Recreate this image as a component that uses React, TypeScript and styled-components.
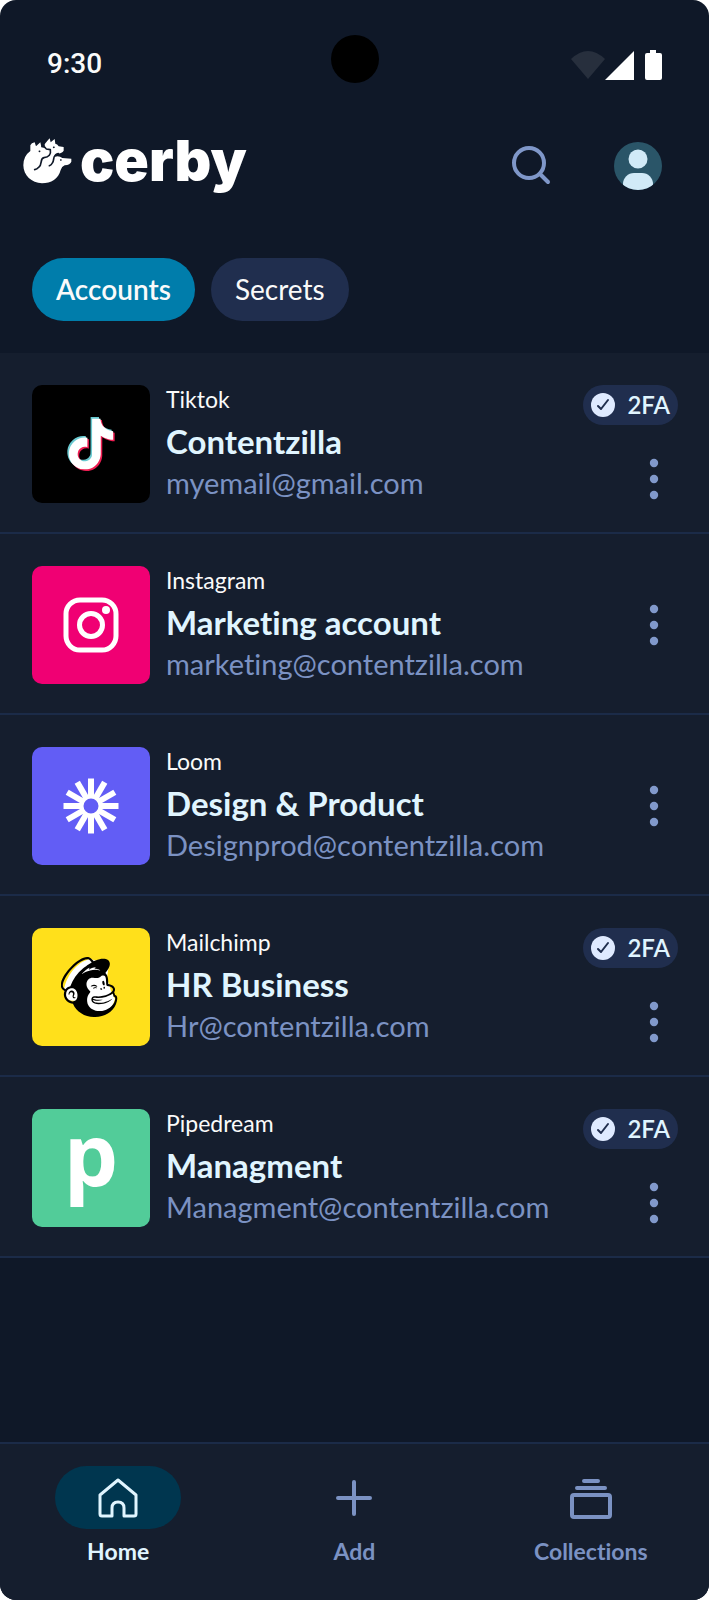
import React from "react";
import styled, { createGlobalStyle } from "styled-components";
import { SiMailchimp, SiTiktok } from "react-icons/si";

const c = {
  page: "#0f1828",
  surface: "#151e2e",
  line: "#1b2b48",
  chip: "#202e4e",
  accent: "#007dab",
  activeNav: "#00364f",
  ice: "#e0f5ff",
  muted: "#7b92c3",
  white: "#fafafa",
};

const GlobalStyle = createGlobalStyle`
  *, *::before, *::after { box-sizing: border-box; }
  body {
    margin: 0;
    background: #fff;
    font-family: Lato, "Open Sans", sans-serif;
    font-variant-ligatures: none;
  }
  button { border: 0; padding: 0; background: none; font: inherit; font-variant-ligatures: none; color: inherit; cursor: pointer; }
  svg { display: block; flex: none; }
`;

const Screen = styled.div`
  display: flex;
  flex-direction: column;
  min-height: 100vh;
  overflow: hidden;
  border-radius: 16px;
  background: ${c.page};
  color: ${c.white};
`;

const StatusBar = styled.div`
  position: relative;
  display: flex;
  align-items: center;
  justify-content: space-between;
  height: 128px;
  padding: 0 47px;
`;

const Clock = styled.time`
  font: 500 28px/32px Roboto, sans-serif;
`;

const Camera = styled.div`
  position: absolute;
  top: 35px;
  left: 50%;
  width: 48px;
  height: 48px;
  margin-left: -24px;
  border-radius: 50%;
  background: #000;
`;

const Header = styled.header`
  display: flex;
  align-items: center;
  justify-content: space-between;
  height: 76px;
  padding: 0 47px 0 23px;
`;

const Brand = styled.a`
  display: flex;
  align-items: center;
  gap: 8px;
  padding-bottom: 10px;
  color: #fff;
  text-decoration: none;
`;

const BrandName = styled.span`
  font: 900 57px/64px Inter, sans-serif;
`;

const HeaderActions = styled.div`
  display: flex;
  align-items: center;
  gap: 59px;
`;

const IconButton = styled.button`
  display: grid;
  place-items: center;
  width: 48px;
  height: 48px;
`;

const Chips = styled.div`
  display: flex;
  gap: 16px;
  padding: 54px 32px 32px;
`;

const Chip = styled.button<{ $active?: boolean }>`
  height: 63px;
  padding: 0 24px 2px;
  border-radius: 32px;
  background: ${(p) => (p.$active ? c.accent : c.chip)};
  color: ${c.white};
  font-size: 28px;
  font-weight: ${(p) => (p.$active ? 600 : 400)};
`;

const List = styled.ul`
  margin: 0;
  padding: 0;
  list-style: none;
  background: ${c.surface};
`;

const Row = styled.li`
  display: flex;
  gap: 16px;
  padding: 32px 31px 29px 32px;
  border-bottom: 2px solid ${c.line};
`;

const Tile = styled.div<{ $color: string }>`
  display: grid;
  place-items: center;
  flex: none;
  width: 118px;
  height: 118px;
  border-radius: 10px;
  background: ${(p) => p.$color};
`;

const Details = styled.div`
  display: flex;
  flex: 1;
  flex-direction: column;
  gap: 6px;
  min-width: 0;
  white-space: nowrap;
`;

const Service = styled.span`
  font-size: 23px;
  line-height: 28px;
`;

const AccountName = styled.span`
  color: ${c.ice};
  font-size: 33px;
  font-weight: 700;
  line-height: 44px;
`;

const Email = styled.span`
  color: ${c.muted};
  font-size: 29px;
  line-height: 28px;
`;

const Side = styled.div<{ $centered: boolean }>`
  display: flex;
  flex-direction: column;
  align-items: flex-end;
  justify-content: ${(p) => (p.$centered ? "center" : "space-between")};
`;

const Badge = styled.span`
  display: flex;
  align-items: center;
  gap: 12px;
  height: 40px;
  padding: 0 8px;
  border-radius: 20px;
  background: ${c.chip};
  color: ${c.ice};
  font-size: 24px;
  font-weight: 600;
`;

const BadgeLabel = styled.span`
  padding-bottom: 2px;
`;

const BottomNav = styled.nav`
  display: grid;
  grid-template-columns: repeat(3, 1fr);
  margin-top: auto;
  padding: 22px 0 35px;
  border-top: 2px solid ${c.line};
  background: ${c.surface};
`;

const NavItem = styled.button<{ $active?: boolean }>`
  display: flex;
  flex-direction: column;
  align-items: center;
  gap: 8px;
  color: ${(p) => (p.$active ? c.ice : c.muted)};
  font-size: 23px;
  font-weight: 700;
  line-height: 28px;
`;

const NavPill = styled.span<{ $active?: boolean }>`
  display: grid;
  place-items: center;
  width: 126px;
  height: 63px;
  border-radius: 32px;
  background: ${(p) => (p.$active ? c.activeNav : "transparent")};
`;

const Letter = styled.span`
  padding-bottom: 30px;
  color: #fff;
  font: 700 86px/88px "Open Sans", sans-serif;
`;

const StatusIcons = () => (
  <svg width="92" height="36" viewBox="-1 -4 92 36" aria-hidden="true">
    <path d="M0 9Q17-7 34 9L17 29Z" fill="#272f3d" />
    <path d="M63 1v29H34Z" fill="#fff" />
    <path d="M79 0h6v3h4q2 0 2 2v23q0 2-2 2H76q-2 0-2-2V5q0-2 2-2h3Z" fill="#fff" />
  </svg>
);

const CerbyMark = () => (
  <svg width="49" height="46" viewBox="68 412 147 138" aria-hidden="true">
    <path
      fill="#fff"
      d="M90 451V434Q93 427 103 425L107 437L120 425L123 438Q130 437 134 439L133 431Q136 426 148 413L151 425L163 415L165 429Q171 430 175 437L190 439V450Q186 459 165 460L164 468Q176 464 186 472L213 474V483Q210 492 193 494Q184 497 181 508C175 534 152 548 125 548C94 548 69 523 69 494Q69 466 90 451Z"
    />
    <path
      fill="none"
      stroke={c.page}
      strokeWidth="5"
      strokeLinecap="round"
      strokeLinejoin="round"
      d="M125 438Q134 437 138 445L150 447Q152 458 147 464Q142 470 131 471C117 474 128 490 115 500Q110 506 103 507M174 459C154 464 164 478 156 487Q153 493 147 495"
    />
    <path fill="none" stroke={c.page} strokeWidth="5" strokeLinecap="round" d="M117 452h1M160 440h1M181 478h1" />
  </svg>
);

const SearchIcon = () => (
  <svg width="40" height="40" viewBox="0 0 40 40" fill="none" stroke="#7f97c9" strokeWidth="4" strokeLinecap="round" aria-hidden="true">
    <circle cx="18" cy="17" r="15" />
    <path d="M29 28l8 8" />
  </svg>
);

const Avatar = () => (
  <svg width="48" height="48" viewBox="0 0 48 48" aria-hidden="true">
    <clipPath id="avatar"><circle cx="24" cy="24" r="24" /></clipPath>
    <g clipPath="url(#avatar)">
      <path d="M0 0h48v48H0Z" fill="#2a5568" />
      <circle cx="24" cy="17" r="9.500" fill="#d1eaf7" />
      <rect x="9" y="31" width="30" height="26" rx="11" fill="#d1eaf7" />
    </g>
  </svg>
);

const CheckIcon = () => (
  <svg width="24" height="24" viewBox="0 0 24 24" aria-hidden="true">
    <circle cx="12" cy="12" r="12" fill="#dfeaff" />
    <path d="M7 13l3 3 7-9" fill="none" stroke={c.chip} strokeWidth="2" strokeLinecap="round" strokeLinejoin="round" />
  </svg>
);

const MoreIcon = () => (
  <svg width="10" height="42" viewBox="0 0 10 42" fill="#8199cb" aria-hidden="true">
    <circle cx="5" cy="5" r="4.200" />
    <circle cx="5" cy="21" r="4.200" />
    <circle cx="5" cy="37" r="4.200" />
  </svg>
);

const TikTokLogo = () => (
  <svg width="54" height="54" viewBox="0 0 54 54" aria-hidden="true">
    <SiTiktok x="0" y="0" size={51} color="#69c9d0" />
    <SiTiktok x="3" y="3" size={51} color="#ee1d52" />
    <SiTiktok x="1.500" y="1.500" size={51} color="#fff" />
  </svg>
);

const InstagramLogo = () => (
  <svg width="56" height="56" viewBox="0 0 56 56" fill="none" stroke="#fff" strokeWidth="5" aria-hidden="true">
    <rect x="3" y="3" width="50" height="50" rx="14" />
    <circle cx="28" cy="28" r="11.500" />
    <circle cx="43" cy="13" r="4" fill="#fff" stroke="none" />
  </svg>
);

const LoomLogo = () => (
  <svg width="56" height="56" viewBox="-28 -28 56 56" aria-hidden="true">
    {Array.from({ length: 12 }, (_, i) => (
      <path key={i} d="M-3-27.500h6v20h-6Z" fill="#fff" transform={`rotate(${i * 30})`} />
    ))}
    <circle r="9.500" fill="#625df5" stroke="#fff" strokeWidth="4" />
  </svg>
);

const MailchimpLogo = () => (
  <svg width="60" height="62" viewBox="2 0 60 62" aria-hidden="true">
    <path
      fill="#fff"
      d="M5 34C7 21 17 6 31 3L50 8L48 22L52 35L56 43Q53 55 43 57L24 55L17 45L7 44Z"
    />
    <SiMailchimp y="1" size={60} color="#000" />
  </svg>
);

const HomeIcon = () => (
  <svg width="40" height="40" viewBox="0 0 40 40" fill="none" stroke={c.ice} strokeWidth="3" strokeLinejoin="round" aria-hidden="true">
    <path d="M2 17L20 2L38 17V36Q38 38 36 38H26V30Q26 24 20 24Q14 24 14 30V38H4Q2 38 2 36Z" />
  </svg>
);

const AddIcon = () => (
  <svg width="36" height="36" viewBox="0 0 36 36" stroke={c.muted} strokeWidth="4" strokeLinecap="round" aria-hidden="true">
    <path d="M18 2v32M2 18h32" />
  </svg>
);

const CollectionsIcon = () => (
  <svg width="42" height="42" viewBox="0 0 42 42" fill="none" stroke={c.muted} strokeWidth="4" strokeLinecap="round" aria-hidden="true">
    <path d="M14 4h14M7 11h28" />
    <rect x="2" y="18" width="38" height="22" rx="2" />
  </svg>
);

const accounts = [
  { service: "Tiktok", name: "Contentzilla", email: "myemail@gmail.com", color: "#000", secure: true, logo: <TikTokLogo /> },
  { service: "Instagram", name: "Marketing account", email: "marketing@contentzilla.com", color: "#f00073", secure: false, logo: <InstagramLogo /> },
  { service: "Loom", name: "Design & Product", email: "Designprod@contentzilla.com", color: "#625df5", secure: false, logo: <LoomLogo /> },
  { service: "Mailchimp", name: "HR Business", email: "Hr@contentzilla.com", color: "#ffe01b", secure: true, logo: <MailchimpLogo /> },
  { service: "Pipedream", name: "Managment", email: "Managment@contentzilla.com", color: "#52cc99", secure: true, logo: <Letter>p</Letter> },
];

export default function App() {
  return (
    <>
      <GlobalStyle />
      <Screen>
        <StatusBar>
          <Clock>9:30</Clock>
          <Camera />
          <StatusIcons />
        </StatusBar>
        <Header>
          <Brand href="#">
            <CerbyMark />
            <BrandName>cerby</BrandName>
          </Brand>
          <HeaderActions>
            <IconButton aria-label="Search"><SearchIcon /></IconButton>
            <IconButton aria-label="Profile"><Avatar /></IconButton>
          </HeaderActions>
        </Header>
        <Chips>
          <Chip $active aria-pressed="true">Accounts</Chip>
          <Chip aria-pressed="false">Secrets</Chip>
        </Chips>
        <List>
          {accounts.map((a) => (
            <Row key={a.service}>
              <Tile $color={a.color}>{a.logo}</Tile>
              <Details>
                <Service>{a.service}</Service>
                <AccountName>{a.name}</AccountName>
                <Email>{a.email}</Email>
              </Details>
              <Side $centered={!a.secure}>
                {a.secure && <Badge><CheckIcon /><BadgeLabel>2FA</BadgeLabel></Badge>}
                <IconButton aria-label={`Options for ${a.name}`}><MoreIcon /></IconButton>
              </Side>
            </Row>
          ))}
        </List>
        <BottomNav>
          <NavItem $active aria-current="page"><NavPill $active><HomeIcon /></NavPill>Home</NavItem>
          <NavItem><NavPill><AddIcon /></NavPill>Add</NavItem>
          <NavItem><NavPill><CollectionsIcon /></NavPill>Collections</NavItem>
        </BottomNav>
      </Screen>
    </>
  );
}
